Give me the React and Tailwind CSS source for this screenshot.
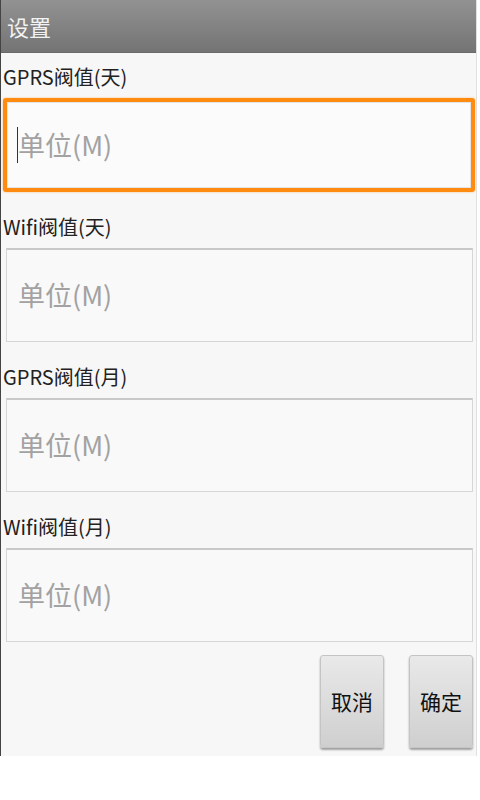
// 设置页面 - 流量阀值设置表单

const font = { fontFamily: '"Noto Sans CJK SC", "Noto Sans", sans-serif' };

const campos = [
  { id: 'gprsDia', label: 'GPRS阀值(天)', enfocado: true },
  { id: 'wifiDia', label: 'Wifi阀值(天)' },
  { id: 'gprsMes', label: 'GPRS阀值(月)' },
  { id: 'wifiMes', label: 'Wifi阀值(月)' },
];

const Campo = ({ label, enfocado }) => (
  <div className="flex flex-col">
    <div className="h-[30px] leading-[30px] pl-[2px] text-[20px] text-[#222]">{label}</div>
    <div className="mt-[6px]">
      {enfocado ? (
        <div className="ml-[2px] mr-px h-[94px] rounded-[3px] border-[4px] border-[#ff8c10] bg-[#fbfbfb] shadow-[0_0_2px_rgba(255,140,16,0.6)]">
          <div className="h-full border border-[#e4e4e4] flex items-center pl-[9px]">
            <span className="w-px h-[36px] bg-[#333]" />
            <span className="text-[27px] text-[#a2a2a2]">单位(M)</span>
          </div>
        </div>
      ) : (
        <div className="ml-[5px] mr-[3px] h-[94px] border border-[#d6d6d6] border-t-[#c8c8c8] border-t-2 bg-[#f9f9f9] flex items-center pl-[11px]">
          <span className="text-[27px] text-[#a2a2a2]">单位(M)</span>
        </div>
      )}
    </div>
  </div>
);

const Boton = ({ children }) => (
  <button className="w-[64px] h-[93px] rounded-[3px] bg-gradient-to-b from-[#e9e9e9] to-[#cfcfcf] border border-[#c4c4c4] shadow-[0_2px_2px_rgba(0,0,0,0.35)] text-[21px] text-[#111]">
    {children}
  </button>
);

export default function App() {
  return (
    <div className="w-[480px] h-[800px] bg-white" style={font}>
      <div className="w-[477px] h-[756px] border-l border-[#444] border-r border-r-[#e0e0e0] bg-[#f7f7f7] flex flex-col">
        {/* Barra de título */}
        <div className="h-[53px] bg-gradient-to-b from-[#929292] to-[#747474] border-b border-[#6a6a6a] flex items-center pl-[6px]">
          <span className="text-[22px] text-[#f2f2f2]">设置</span>
        </div>

        {/* Campos */}
        <div className="flex flex-col gap-[20px] mt-[9px]">
          {campos.map((c) => (
            <Campo key={c.id} label={c.label} enfocado={c.enfocado} />
          ))}
        </div>

        {/* Acciones */}
        <div className="flex justify-end gap-[25px] mt-[13px] pr-[3px]">
          <Boton>取消</Boton>
          <Boton>确定</Boton>
        </div>
      </div>
    </div>
  );
}
